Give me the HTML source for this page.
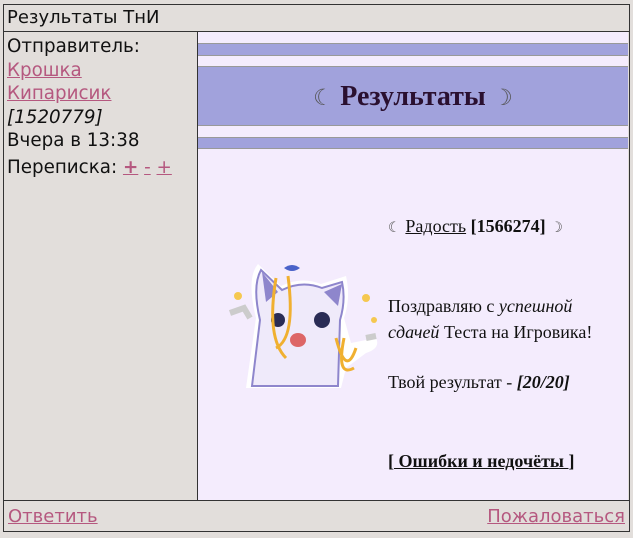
<!DOCTYPE html>
<html><head><meta charset="utf-8"><style>
body{margin:0;width:633px;height:538px;background:#e2dedb;position:relative;overflow:hidden;font-family:"DejaVu Sans","Liberation Sans",sans-serif;}
.frame{position:absolute;left:3px;top:4px;width:625px;height:526px;border:1px solid #333;}
.abs{position:absolute;white-space:nowrap;}
a{color:#b5587f;}
.serif{font-family:"Liberation Serif","DejaVu Serif",serif;color:#111;font-size:18px;}
.m{font-family:"DejaVu Sans",sans-serif;font-size:0.8em;color:#555;font-weight:normal}
</style></head><body>
<div class="frame"></div>
<div class="abs" style="left:4px;top:31px;width:625px;border-top:1px solid #333"></div>
<div class="abs" style="left:4px;top:500px;width:625px;border-top:1px solid #333"></div>
<div class="abs" style="left:197px;top:31px;height:469px;border-left:1px solid #333"></div>
<div class="abs" style="left:7px;top:7px;font-size:18px;color:#111">Результаты ТнИ</div>
<div class="abs" style="left:7px;top:35px;font-size:18.3px;line-height:23.5px;color:#111">Отправитель:<br><a href="#">Крошка</a><br><a href="#">Кипарисик</a><br><i>[1520779]</i><br>Вчера в 13:38<br><span style="line-height:30px">Переписка: <a href="#" style="font-weight:bold">+</a> <a href="#">-</a> <a href="#">+</a></span></div>
<div class="abs" style="left:198px;top:32px;width:430px;height:468px;background:#f4ecfd"></div>
<div class="abs" style="left:198px;top:43px;width:430px;height:11px;background:#a1a2dc;border-top:1px solid #999;border-bottom:1px solid #999"></div>
<div class="abs" style="left:198px;top:66px;width:430px;height:58px;background:#a1a2dc;border-top:1px solid #999;border-bottom:1px solid #999"></div>
<div class="abs serif" style="left:198px;top:81px;width:430px;text-align:center;font-size:28px;font-weight:bold;color:#2a1030"><span class="m">☾</span> Результаты <span class="m">☽</span></div>
<div class="abs" style="left:198px;top:137px;width:430px;height:10px;background:#a1a2dc;border-top:1px solid #999;border-bottom:1px solid #999"></div>
<svg class="abs" style="left:226px;top:258px" width="156" height="136" viewBox="0 0 156 136">
<path d="M20 130 L30 60 Q20 20 32 6 L55 28 Q75 18 95 26 L120 18 Q125 40 118 60 L125 85 L150 80 Q155 90 140 95 L120 110 L115 130 Z" fill="#fff"/>
<path d="M26 128 L34 62 Q26 28 35 12 L56 32 Q76 22 96 30 L116 24 Q120 42 114 62 L112 128 Z" fill="#efeafa" stroke="#8e86cc" stroke-width="2"/>
<path d="M36 14 L52 34 L40 44 Z" fill="#8e86cc"/><path d="M116 26 L98 34 L112 48Z" fill="#8e86cc"/>
<circle cx="52" cy="62" r="7" fill="#2a2c55"/><circle cx="96" cy="62" r="8" fill="#2a2c55"/>
<ellipse cx="72" cy="82" rx="8" ry="7" fill="#d66"/>
<path d="M58 10 q8 -6 16 0 q-8 6 -16 0" fill="#4a62c9"/>
<path d="M50 20 Q40 80 60 100 M62 18 Q70 80 50 90 M110 80 Q120 120 130 90 M118 80 Q110 120 128 110" stroke="#f0b030" stroke-width="3" fill="none"/>
<path d="M4 55 L18 50 L24 60 M140 80 L150 78" stroke="#ccc" stroke-width="6" fill="none"/>
<circle cx="12" cy="38" r="4" fill="#f5c850"/><circle cx="140" cy="40" r="4" fill="#f5c850"/><circle cx="148" cy="62" r="3" fill="#f5c850"/>
</svg>
<div class="abs serif" style="left:388px;top:216px"><span class="m">☾</span> <a href="#" style="color:#111">Радость</a> <b>[1566274]</b> <span class="m">☽</span></div>
<div class="abs serif" style="left:388px;top:293px;line-height:26px">Поздравляю с <i>успешной</i><br><i>сдачей</i> Теста на Игровика!</div>
<div class="abs serif" style="left:388px;top:372px">Твой результат - <b><i>[20/20]</i></b></div>
<div class="abs serif" style="left:388px;top:451px"><b>[<a href="#" style="color:#111"> Ошибки и недочёты </a>]</b></div>
<div class="abs" style="left:8px;top:506px;font-size:18px"><a href="#">Ответить</a></div>
<div class="abs" style="right:8px;top:506px;font-size:18px"><a href="#">Пожаловаться</a></div>
</body></html>
